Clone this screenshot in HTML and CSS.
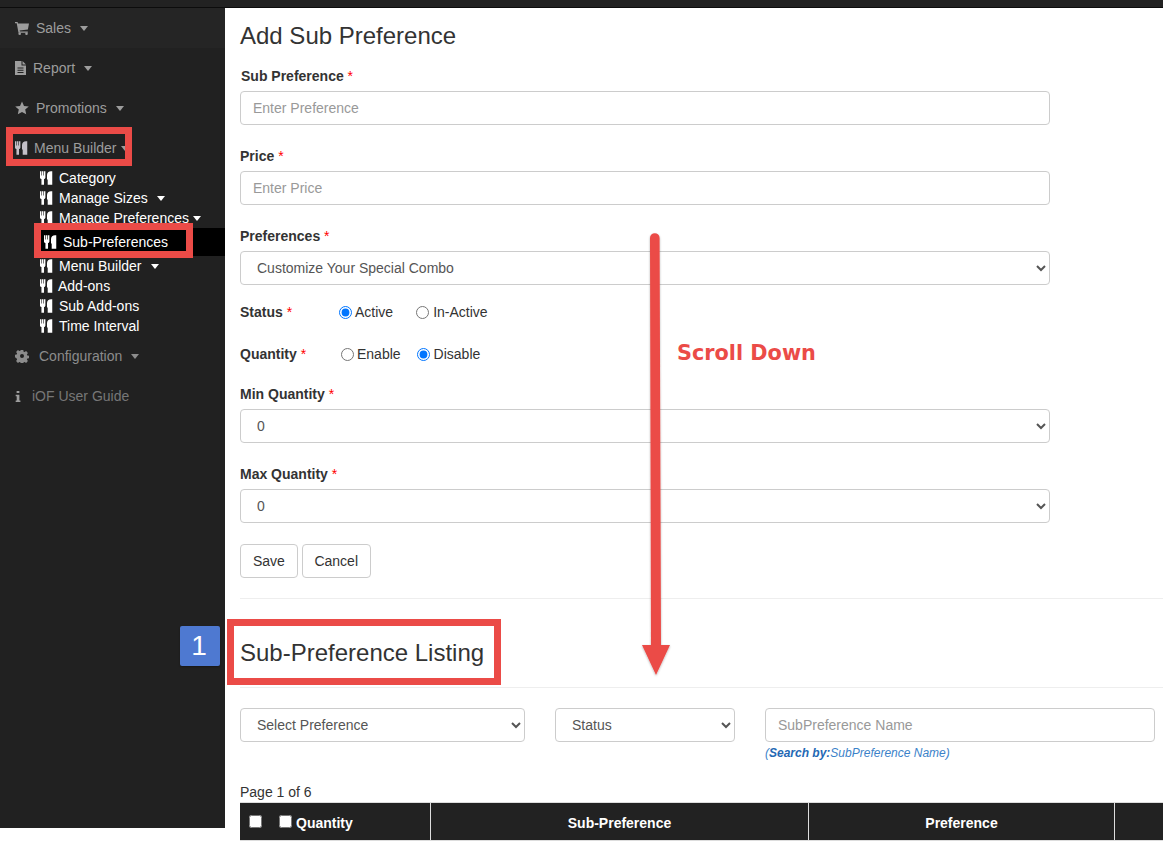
FILE: index.html
```html
<!DOCTYPE html>
<html lang="en">
<head>
<meta charset="utf-8">
<title>Add Sub Preference</title>
<link rel="stylesheet" href="styles.css">
</head>
<body>
<svg class="defs" width="0" height="0" aria-hidden="true">
  <symbol id="i-cutlery" viewBox="0 0 13 14"><path d="M0 0h1.300v4.500h.6V0h1.600v4.500h.6V0h1.500v6.400c0 .9-.7 1.500-1.400 1.700V14H1.500V8.100C.7 7.900 0 7.300 0 6.400zM8 14V8.500H7.300V4C7.300 1.500 9 0 11.500 0H13v14z"/></symbol>
  <symbol id="i-cart" viewBox="0 0 14 14"><path d="M0 1h2.600l.4 1.500H14l-1.100 5.900-8.300 1 .3 1.100h7.900v1.300H3.500L1.700 2.300H0z"/><circle cx="4.700" cy="12.700" r="1.300"/><circle cx="11.500" cy="12.700" r="1.300"/></symbol>
  <symbol id="i-file" viewBox="0 0 11 14"><path fill-rule="evenodd" d="M0 0h6.500v4.500H11V14H0zM2.500 6.500v1h6v-1zm0 2.200v1h6v-1zm0 2.200v1h6v-1zM7.500 0L11 3.500H7.500z"/></symbol>
  <symbol id="i-star" viewBox="0 0 14 14"><path d="M7 .5l2 4.400 4.800.5-3.600 3.200 1 4.700L7 10.900l-4.200 2.400 1-4.700L.2 5.400 5 4.900z"/></symbol>
  <symbol id="i-cog" viewBox="0 0 14 14"><path fill-rule="evenodd" d="M5.700 1h2.600l.3 1.700 1 .4 1.500-1 1.800 1.800-1 1.500.4 1 1.700.3v2.600l-1.700.3-.4 1 1 1.500-1.800 1.800-1.500-1-1 .4-.3 1.700H5.700l-.3-1.700-1-.4-1.500 1-1.800-1.800 1-1.500-.4-1L0 8.300V5.700l1.700-.3.400-1-1-1.500 1.800-1.800 1.500 1 1-.4zM7 5a2 2 0 100 4 2 2 0 000-4z"/></symbol>
  <symbol id="i-info" viewBox="0 0 6 14"><path d="M1.500 1h3v2.200h-3zM.5 5h4v6.300h1.100V13H.5v-1.700h1.100V6.700H.5z"/></symbol>
</svg>

<div class="topbar"></div>
<div class="layout">
  <nav class="sidebar">
    <div class="nav-item nav-first"><svg class="ico ico-cart"><use href="#i-cart"/></svg><span>Sales</span><i class="caret"></i></div>
    <div class="nav-item"><svg class="ico ico-file"><use href="#i-file"/></svg><span>Report</span><i class="caret"></i></div>
    <div class="nav-item"><svg class="ico ico-cart"><use href="#i-star"/></svg><span>Promotions</span><i class="caret"></i></div>
    <div class="nav-item nav-menu"><svg class="ico ico-cut"><use href="#i-cutlery"/></svg><span>Menu Builder</span><i class="caret caret-tight"></i></div>
    <ul class="submenu">
      <li class="sub-item"><svg class="ico ico-cut"><use href="#i-cutlery"/></svg>Category</li>
      <li class="sub-item"><svg class="ico ico-cut"><use href="#i-cutlery"/></svg>Manage Sizes<i class="caret caret-white"></i></li>
      <li class="sub-item"><svg class="ico ico-cut"><use href="#i-cutlery"/></svg>Manage Preferences<i class="caret caret-white caret-tight"></i></li>
      <li class="sub-item sub-active"><svg class="ico ico-cut"><use href="#i-cutlery"/></svg>Sub-Preferences</li>
      <li class="sub-item"><svg class="ico ico-cut"><use href="#i-cutlery"/></svg>Menu Builder<i class="caret caret-white"></i></li>
      <li class="sub-item sub-addons"><svg class="ico ico-cut"><use href="#i-cutlery"/></svg>Add-ons</li>
      <li class="sub-item"><svg class="ico ico-cut"><use href="#i-cutlery"/></svg>Sub Add-ons</li>
      <li class="sub-item"><svg class="ico ico-cut"><use href="#i-cutlery"/></svg>Time Interval</li>
    </ul>
    <div class="nav-item nav-config"><svg class="ico ico-cart"><use href="#i-cog"/></svg><span>Configuration</span><i class="caret"></i></div>
    <div class="nav-item nav-guide"><svg class="ico ico-info"><use href="#i-info"/></svg><span>iOF User Guide</span></div>
  </nav>

  <main class="content">
    <section class="pad">
      <h3 class="title">Add Sub Preference</h3>
      <div class="group">
        <label class="label label-in">Sub Preference <b class="req">*</b></label>
        <input class="control" type="text" placeholder="Enter Preference">
      </div>
      <div class="group">
        <label class="label">Price <b class="req">*</b></label>
        <input class="control" type="text" placeholder="Enter Price">
      </div>
      <div class="group">
        <label class="label">Preferences <b class="req">*</b></label>
        <select class="control"><option>Customize Your Special Combo</option></select>
      </div>
      <div class="radio-row status-row">
        <span class="label radio-label">Status <b class="req">*</b></span>
        <label class="radio"><input type="radio" name="status" checked>Active</label>
        <label class="radio radio-wide"><input type="radio" name="status">In-Active</label>
      </div>
      <div class="radio-row qty-row">
        <span class="label radio-label">Quantity <b class="req">*</b></span>
        <label class="radio"><input type="radio" name="qty">Enable</label>
        <label class="radio radio-wide"><input type="radio" name="qty" checked>Disable</label>
      </div>
      <div class="group">
        <label class="label">Min Quantity <b class="req">*</b></label>
        <select class="control"><option>0</option></select>
      </div>
      <div class="group">
        <label class="label">Max Quantity <b class="req">*</b></label>
        <select class="control"><option>0</option></select>
      </div>
      <div class="actions">
        <button class="btn" type="button">Save</button>
        <button class="btn btn-cancel" type="button">Cancel</button>
      </div>
    </section>
    <hr class="rule rule-top">
    <h3 class="title listing">Sub-Preference Listing</h3>
    <hr class="rule">
    <div class="filters">
      <select class="control f-pref"><option>Select Preference</option></select>
      <select class="control f-status"><option>Status</option></select>
      <div class="f-name">
        <input class="control" type="text" placeholder="SubPreference Name">
        <p class="hint">(<b>Search by:</b>SubPreference Name)</p>
      </div>
    </div>
    <p class="pageinfo">Page 1 of 6</p>
    <div class="thead">
      <div class="th th-qty"><input type="checkbox" class="cb"><input type="checkbox" class="cb cb2">Quantity</div>
      <div class="th th-sub">Sub-Preference</div>
      <div class="th th-pref">Preference</div>
      <div class="th th-rest"></div>
    </div>
  </main>
</div>

<div class="mark mark-menu"></div>
<div class="mark mark-sub"></div>
<div class="mark mark-listing"></div>
<div class="badge">1</div>
<div class="scroll-note">Scroll Down</div>
<svg class="arrow" width="60" height="460" viewBox="0 0 60 460" aria-hidden="true">
  <defs><filter id="sh" x="-40%" y="-5%" width="180%" height="110%"><feDropShadow dx="0" dy="1" stdDeviation="1.200" flood-color="#000" flood-opacity=".3"/></filter></defs>
  <path filter="url(#sh)" fill="#eb4b47" d="M23 8a4.800 4.800 0 019.600 0L34 415h9l-14 30-14-30h9z"/>
</svg>
</body>
</html>
```

FILE: styles.css
```css
* { box-sizing: border-box; }
html, body { margin: 0; height: 842px; overflow: hidden; }
body { background: #fff; color: #333; font: 14px/20px "Liberation Sans", Arial, sans-serif; position: relative; }
.defs { position: absolute; }

.topbar { height: 8px; background: #222; border-bottom: 1px solid #0c0c0c; }
.layout { display: flex; align-items: flex-start; }

.sidebar { width: 225px; height: 820px; flex: none; background: #212121; color: #9d9d9d; }
.ico { fill: currentColor; flex: none; display: block; }
.nav-item { height: 40px; display: flex; align-items: center; padding-left: 15px; }
.nav-first { background: #252525; }
.ico-cart { width: 14px; height: 14px; margin-right: 7px; }
.ico-file { width: 11px; height: 14px; margin-right: 7px; }
.ico-cut { width: 12.500px; height: 14px; margin-right: 6.500px; }
.ico-info { width: 6px; height: 13px; margin-right: 11px; }
.nav-menu .ico-cut { color: #c4c0c8; }
.nav-config .ico-cart { margin-right: 10px; }
.nav-config { color: #8c8c8c; }
.nav-guide { color: #777; }
.nav-guide .ico-info { color: #9d9d9d; }
.caret { width: 0; height: 0; margin-left: 9px; border-top: 5px solid currentColor; border-left: 4.500px solid transparent; border-right: 4.500px solid transparent; display: block; }
.caret-tight { margin-left: 4px; }
.caret-white { color: #fff; }

.submenu { list-style: none; margin: 0; padding: 0 0 0 40px; color: #fff; }
.sub-item { height: 20px; display: flex; align-items: center; }
.sub-active { height: 28px; margin-left: -5px; padding-left: 9px; background: #000; }
.sub-addons .ico-cut { margin-right: 5.500px; }

.content { flex: 1; min-width: 0; }
.pad { padding: 0 0 0 15px; }
.title { margin: 0; font-size: 24px; line-height: 26px; font-weight: 400; color: #333; }
.pad > .title { padding-top: 15px; margin-bottom: 17px; }
.group { width: 810px; margin-bottom: 21px; }
.label { display: block; font-weight: 700; line-height: 20px; margin-bottom: 5px; }
.label-in { padding-left: 1px; }
.req { color: #f00; font-weight: 400; }
.control { display: block; width: 100%; height: 34px; padding: 6px 12px; font: 14px/20px "Liberation Sans", Arial, sans-serif; color: #555; background: #fff; border: 1px solid #ccc; border-radius: 4px; }
.control::placeholder { color: #999; }

.radio-row { display: flex; align-items: center; height: 20px; }
.radio-label { margin: 0; width: 99px; }
.status-row { margin-top: -4px; }
.status-row .radio { margin-right: 23px; }
.qty-row { margin-top: 22px; margin-bottom: 20px; }
.qty-row .radio-label { width: 101px; }
.qty-row .radio { margin-right: 16px; }
.radio { display: flex; align-items: center; color: #333; }
.radio input { margin: 0 3px 0 0; width: 13px; height: 13px; }
.radio-wide input { margin-right: 4px; }

.actions { display: flex; gap: 4px; }
.btn { height: 34px; padding: 6px 12px; font: 14px/20px "Liberation Sans", Arial, sans-serif; color: #333; background: #fff; border: 1px solid #ccc; border-radius: 4px; }
.btn-cancel { padding: 6px 11.500px; }

.rule { margin: 0 0 0 15px; border: 0; border-top: 1px solid #eee; height: 0; }
.rule-top { margin-top: 20px; }
.listing { margin: 41px 0 21px 15px; }

.filters { display: flex; align-items: flex-start; padding: 20px 0 0 15px; }
.f-pref { width: 285px; margin-right: 30px; }
.f-status { width: 180px; margin-right: 30px; }
.f-name { width: 390px; }
.hint { margin: 3px 0 0; font-size: 12px; line-height: 17px; font-style: italic; color: #3b82c9; }
.hint b { color: #2468b4; }

.pageinfo { margin: 20px 0 0 15px; line-height: 20px; height: 20px; }
.thead { display: flex; margin-left: 15px; height: 39px; background: #222; color: #fff; font-weight: 700; border-top: 1px solid #ddd; border-bottom: 1px solid #ddd; }
.th { display: flex; align-items: center; justify-content: center; border-right: 1px solid #ddd; flex: none; padding-top: 3px; }
.th-qty { width: 191px; justify-content: flex-start; padding-left: 9px; }
.th-sub { width: 378px; }
.th-pref { width: 306px; }
.th-rest { flex: 1; border-right: 0; }
.cb { margin: -3px 0 0; width: 13px; height: 13px; }
.cb2 { margin: -3px 4px 0 17px; }

.mark { position: absolute; border: 7px solid #eb4b47; }
.mark-menu { left: 6px; top: 127px; width: 126px; height: 39px; }
.mark-sub { left: 34px; top: 223px; width: 159px; height: 35px; }
.mark-listing { left: 227px; top: 619px; width: 274px; height: 66px; }
.badge { position: absolute; left: 180px; top: 626px; width: 40px; padding-right: 2px; height: 40px; background: #4e79d1; border-radius: 2px; color: #fff; font-size: 28px; line-height: 39px; text-align: center; box-shadow: 0 1px 2px rgba(0,0,0,.3); }
.scroll-note { position: absolute; left: 677px; top: 339px; color: #eb4b47; font: 700 20.800px/28px "DejaVu Sans", sans-serif; }
.arrow { position: absolute; left: 627px; top: 230px; }
```
